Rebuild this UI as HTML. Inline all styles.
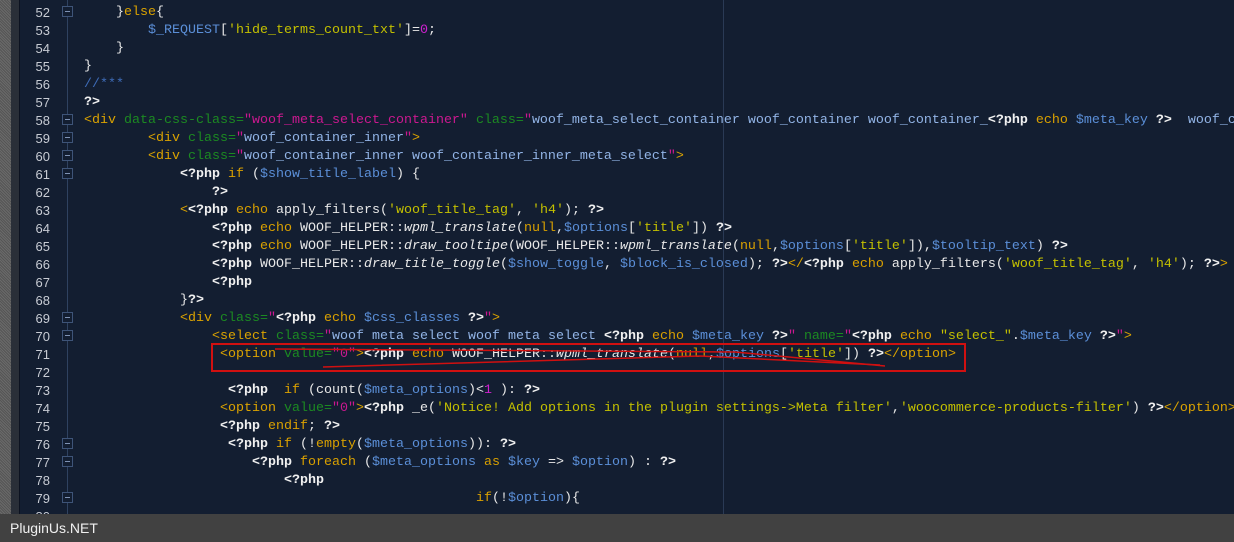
<!DOCTYPE html>
<html><head><meta charset="utf-8"><style>
html,body{margin:0;padding:0;width:1234px;height:542px;overflow:hidden;background:#131e31;}
#wrap{position:absolute;left:0;top:0;width:1234px;height:514px;overflow:hidden;}
.g1{position:absolute;left:0;top:0;width:11px;height:514px;background:repeating-linear-gradient(45deg,#555 0 1px,#6a6a6a 1px 2px);}
.g2{position:absolute;left:11px;top:0;width:8px;height:514px;background:#2a2f38;border-right:1px solid #0c1220;}
.edge{position:absolute;left:723px;top:0;width:1px;height:514px;background:#2a3a55;}
.foldline{position:absolute;left:67px;top:0;width:1px;height:514px;background:#2f4260;}
.fold{position:absolute;left:62px;width:9px;height:9px;border:1px solid #3e5478;background:#131e31;}
.fold:after{content:"";position:absolute;left:2px;top:4px;width:5px;height:1px;background:#7f93b5;}
.ln{position:absolute;left:20px;width:30px;text-align:right;color:#c8ccd4;font:13px "Liberation Sans",sans-serif;}
.c{position:absolute;white-space:pre;font:13.33px "Liberation Mono",monospace;color:#e8e8e8;}
.t{color:#dba300}.a{color:#1c8a22}.q{color:#cc1890}.s{color:#92b4e6}.p{color:#f0f0f0;font-weight:bold}
.k{color:#d9a000}.v{color:#5b8fd8}.y{color:#c3c000}.n{color:#d020d0}.f{font-style:italic}.cm{color:#3e6cb8}
.bar{position:absolute;left:0;top:514px;width:1234px;height:28px;background:#414141;color:#f0f0f0;font:14px "Liberation Sans",sans-serif;}
.box{position:absolute;left:211px;top:343px;width:751px;height:25px;border:2px solid #d01010;}
</style></head><body>
<div id="wrap">
<div class="g1"></div><div class="g2"></div><div class="foldline"></div><div class="edge"></div>
<div id="L"></div>
</div>
<script>
var L=[
[52,116,'}<span class="t">else</span>{',1],
[53,148,'<span class="v">$_REQUEST</span>[<span class="y">\'hide_terms_count_txt\'</span>]=<span class="n">0</span>;'],
[54,116,'}'],
[55,84,'}'],
[56,84,'<span class="cm">//***</span>'],
[57,84,'<span class="p">?&gt;</span>'],
[58,84,'<span class="t">&lt;div</span> <span class="a">data-css-class=</span><span class="q">"woof_meta_select_container"</span> <span class="a">class=</span><span class="q">"</span><span class="s">woof_meta_select_container woof_container woof_container_</span><span class="p">&lt;?php</span> <span class="k">echo</span> <span class="v">$meta_key</span> <span class="p">?&gt;</span>  <span class="s">woof_container</span>',1],
[59,148,'<span class="t">&lt;div</span> <span class="a">class=</span><span class="q">"</span><span class="s">woof_container_inner</span><span class="q">"</span><span class="t">&gt;</span>',1],
[60,148,'<span class="t">&lt;div</span> <span class="a">class=</span><span class="q">"</span><span class="s">woof_container_inner woof_container_inner_meta_select</span><span class="q">"</span><span class="t">&gt;</span>',1],
[61,180,'<span class="p">&lt;?php</span> <span class="k">if</span> (<span class="v">$show_title_label</span>) {',1],
[62,212,'<span class="p">?&gt;</span>'],
[63,180,'<span class="t">&lt;</span><span class="p">&lt;?php</span> <span class="k">echo</span> apply_filters(<span class="y">\'woof_title_tag\'</span>, <span class="y">\'h4\'</span>); <span class="p">?&gt;</span>'],
[64,212,'<span class="p">&lt;?php</span> <span class="k">echo</span> WOOF_HELPER::<span class="f">wpml_translate</span>(<span class="k">null</span>,<span class="v">$options</span>[<span class="y">\'title\'</span>]) <span class="p">?&gt;</span>'],
[65,212,'<span class="p">&lt;?php</span> <span class="k">echo</span> WOOF_HELPER::<span class="f">draw_tooltipe</span>(WOOF_HELPER::<span class="f">wpml_translate</span>(<span class="k">null</span>,<span class="v">$options</span>[<span class="y">\'title\'</span>]),<span class="v">$tooltip_text</span>) <span class="p">?&gt;</span>'],
[66,212,'<span class="p">&lt;?php</span> WOOF_HELPER::<span class="f">draw_title_toggle</span>(<span class="v">$show_toggle</span>, <span class="v">$block_is_closed</span>); <span class="p">?&gt;</span><span class="t">&lt;/</span><span class="p">&lt;?php</span> <span class="k">echo</span> apply_filters(<span class="y">\'woof_title_tag\'</span>, <span class="y">\'h4\'</span>); <span class="p">?&gt;</span><span class="t">&gt;</span>'],
[67,212,'<span class="p">&lt;?php</span>'],
[68,180,'}<span class="p">?&gt;</span>'],
[69,180,'<span class="t">&lt;div</span> <span class="a">class=</span><span class="q">"</span><span class="p">&lt;?php</span> <span class="k">echo</span> <span class="v">$css_classes</span> <span class="p">?&gt;</span><span class="q">"</span><span class="t">&gt;</span>',1],
[70,212,'<span class="t">&lt;select</span> <span class="a">class=</span><span class="q">"</span><span class="s">woof meta select woof meta select </span><span class="p">&lt;?php</span> <span class="k">echo</span> <span class="v">$meta_key</span> <span class="p">?&gt;</span><span class="q">"</span> <span class="a">name=</span><span class="q">"</span><span class="p">&lt;?php</span> <span class="k">echo</span> <span class="y">"select_"</span>.<span class="v">$meta_key</span> <span class="p">?&gt;</span><span class="q">"</span><span class="t">&gt;</span>',1],
[71,220,'<span class="t">&lt;option</span> <span class="a">value=</span><span class="q">"0"</span><span class="t">&gt;</span><span class="p">&lt;?php</span> <span class="k">echo</span> WOOF_HELPER::<span class="f">wpml_translate</span>(<span class="k">null</span>,<span class="v">$options</span>[<span class="y">\'title\'</span>]) <span class="p">?&gt;</span><span class="t">&lt;/option&gt;</span>'],
[72,220,''],
[73,228,'<span class="p">&lt;?php</span>  <span class="k">if</span> (count(<span class="v">$meta_options</span>)&lt;<span class="n">1</span> ): <span class="p">?&gt;</span>'],
[74,220,'<span class="t">&lt;option</span> <span class="a">value=</span><span class="q">"0"</span><span class="t">&gt;</span><span class="p">&lt;?php</span> _e(<span class="y">\'Notice! Add options in the plugin settings-&gt;Meta filter\'</span>,<span class="y">\'woocommerce-products-filter\'</span>) <span class="p">?&gt;</span><span class="t">&lt;/option&gt;</span>'],
[75,220,'<span class="p">&lt;?php</span> <span class="k">endif</span>; <span class="p">?&gt;</span>'],
[76,228,'<span class="p">&lt;?php</span> <span class="k">if</span> (!<span class="k">empty</span>(<span class="v">$meta_options</span>)): <span class="p">?&gt;</span>',1],
[77,252,'<span class="p">&lt;?php</span> <span class="k">foreach</span> (<span class="v">$meta_options</span> <span class="k">as</span> <span class="v">$key</span> =&gt; <span class="v">$option</span>) : <span class="p">?&gt;</span>',1],
[78,284,'<span class="p">&lt;?php</span>'],
[79,476,'<span class="k">if</span>(!<span class="v">$option</span>){',1],
[80,540,'']
];
var h='';
L.forEach(function(r){var top=5+(r[0]-52)*18;
h+='<div class="ln" style="top:'+(top)+'px">'+r[0]+'</div>';
if(r[3])h+='<div class="fold" style="top:'+(top+1)+'px"></div>';
h+='<div class="c" style="left:'+r[1]+'px;top:'+top+'px">'+r[2]+'</div>';});
document.getElementById('L').innerHTML=h;
</script>
<div class="box"></div>
<svg style="position:absolute;left:0;top:0" width="1234" height="542"><path d="M275 349 L735 352 L885 366" stroke="#d01010" stroke-width="1.5" fill="none"/><path d="M323 367 L700 356 L880 365" stroke="#d01010" stroke-width="1.5" fill="none"/></svg>
<div class="bar"><span style="position:absolute;left:10px;top:6px">PluginUs.NET</span></div>
</body></html>
